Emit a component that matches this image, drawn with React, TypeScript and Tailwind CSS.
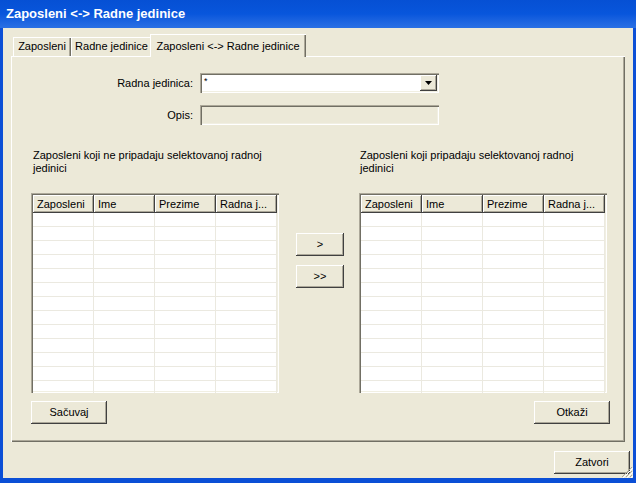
const raised = "bg-[#ece9d8] shadow-[inset_-1px_-1px_#404040,inset_1px_1px_#ffffff,inset_-2px_-2px_#aca899]";
const sunken =
  "shadow-[inset_1px_1px_#aca899,inset_2px_2px_#716f64,inset_-1px_-1px_#ffffff,inset_-2px_-2px_#f1efe2]";

function Button({ label, className = "w-[76px]" }: { label: string; className?: string }) {
  return (
    <div className={`flex h-[23px] items-center justify-center ${raised} ${className}`}>
      {label}
    </div>
  );
}

function Grid() {
  const cols = ["Zaposleni", "Ime", "Prezime", "Radna j..."];
  const rows = Array.from({ length: 13 });
  return (
    <div className={`h-[200px] w-[248px] overflow-hidden bg-white p-[2px] ${sunken}`}>
      <div className="flex h-[18px]">
        {cols.map((c) => (
          <div
            key={c}
            className={`flex w-[61px] items-center whitespace-nowrap pl-[4px] pt-[1px] ${raised}`}
          >
            {c}
          </div>
        ))}
      </div>
      {rows.map((_, i) => (
        <div key={i} className="flex h-[14px] border-b border-[#ebe9e0]">
          {cols.map((c) => (
            <div key={c} className="w-[61px] border-r border-[#ebe9e0]" />
          ))}
        </div>
      ))}
    </div>
  );
}

function Tab({ label, active = false, className = "" }: { label: string; active?: boolean; className?: string }) {
  return active ? (
    <div
      className={`relative z-10 -mb-[1px] flex h-[23px] items-start justify-center whitespace-nowrap bg-[#ece9d8] pt-[4px] shadow-[inset_1px_1px_#ffffff,inset_-1px_0_#716f64,inset_-2px_0_#aca899] ${className}`}
    >
      {label}
    </div>
  ) : (
    <div
      className={`flex h-[19px] items-center justify-center whitespace-nowrap bg-[#ece9d8] shadow-[inset_1px_1px_#ffffff,inset_-1px_0_#716f64,inset_-2px_0_#aca899] ${className}`}
    >
      {label}
    </div>
  );
}

export default function App() {
  return (
    <div className="flex h-[483px] w-[636px] flex-col bg-[#0b4fd6] font-['Liberation_Sans',Arial,sans-serif] text-[11px] text-black">
      {/* title bar */}
      <div className="flex h-[28px] items-center bg-gradient-to-b from-[#0650d4] via-[#0856dc] to-[#2a70e4] px-[6px]">
        <span className="text-[13px] font-bold text-white">Zaposleni &lt;-&gt; Radne jedinice</span>
      </div>

      {/* window body */}
      <div className="relative mx-[3px] mb-[5px] flex flex-1 flex-col bg-[#ece9d8]">
        {/* tabs */}
        <div className="ml-[10px] mt-[6px] flex h-[22px] items-end">
          <Tab label="Zaposleni" className="w-[58px]" />
          <Tab label="Radne jedinice" className="w-[81px]" />
          <Tab label="Zaposleni <-> Radne jedinice" active className="-ml-[2px] w-[156px]" />
        </div>

        {/* tab panel */}
        <div className="ml-[8px] mr-[8px] flex h-[386px] flex-col pt-[17px] shadow-[inset_1px_1px_#ffffff,inset_-1px_-1px_#716f64,inset_-2px_-2px_#aca899]">
          <div className="flex h-[20px] items-center">
            <div className="w-[182px] text-right">Radna jedinica:</div>
            <div className={`ml-[7px] flex h-[20px] w-[239px] items-start justify-between bg-white p-[2px] ${sunken}`}>
              <span className="pl-[2px] text-[9px] leading-[12px]">*</span>
              <div className={`flex h-[16px] w-[17px] items-center justify-center ${raised}`}>
                <svg width="7" height="4" viewBox="0 0 7 4">
                  <path d="M0 0h7L3.5 4z" fill="#000" />
                </svg>
              </div>
            </div>
          </div>

          <div className="mt-[12px] flex h-[20px] items-center">
            <div className="w-[182px] text-right">Opis:</div>
            <div className={`ml-[7px] h-[20px] w-[239px] bg-[#ece9d8] ${sunken}`} />
          </div>

          <div className="mt-[24px] flex leading-[13px]">
            <div className="ml-[22px] w-[250px]">
              Zaposleni koji ne pripadaju selektovanoj radnoj
              <br />
              jedinici
            </div>
            <div className="ml-[77px] w-[250px]">
              Zaposleni koji pripadaju selektovanoj radnoj
              <br />
              jedinici
            </div>
          </div>

          <div className="ml-[20px] mt-[18px] flex">
            <Grid />
            <div className="ml-[17px] mr-[15px] flex w-[48px] flex-col gap-[9px] pt-[40px]">
              <Button label=">" className="w-[48px]" />
              <Button label=">>" className="w-[48px]" />
            </div>
            <Grid />
          </div>

          <div className="ml-[20px] mr-[15px] mt-[8px] flex justify-between">
            <Button label="Sačuvaj" />
            <Button label="Otkaži" />
          </div>
        </div>

        <div className="mr-[3px] mt-[9px] flex justify-end">
          <Button label="Zatvori" />
        </div>

        {/* size grip */}
        <svg className="absolute bottom-0 right-0" width="12" height="12" viewBox="0 0 12 12">
          <path d="M11 1L1 11M11 5L5 11M11 9L9 11" stroke="#aca899" strokeWidth="1" />
          <path d="M12 2L2 12M12 6L6 12M12 10L10 12" stroke="#ffffff" strokeWidth="1" />
        </svg>
      </div>
    </div>
  );
}
